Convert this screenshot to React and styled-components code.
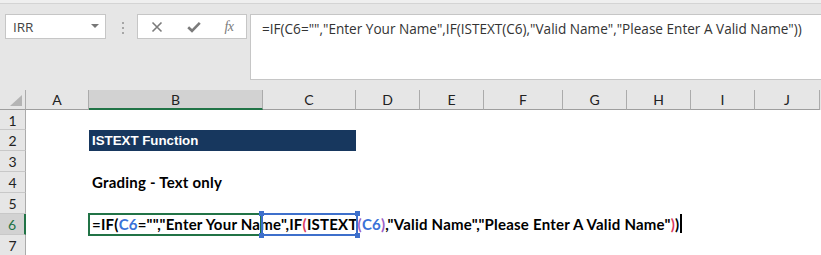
import React from "react";
import styled, { createGlobalStyle } from "styled-components";

const GlobalStyle = createGlobalStyle`
  html, body { margin: 0; padding: 0; background: #ffffff; }
  body { overflow: hidden; font-family: "Lato", "Liberation Sans", sans-serif; }
  * { box-sizing: border-box; }
`;

const COLS = "26px 63px 174px 93px 64px 64px 79px 64px 64px 64px 65px";

const Page = styled.div`
  width: 821px;
  height: 255px;
  overflow: hidden;
  background: #fff;
`;

const TopStrip = styled.div`
  height: 4px;
  background: #efefef;
  border-bottom: 1px solid #d4d4d4;
`;

const Toolbar = styled.div`
  height: 86px;
  background: #e6e6e6;
  display: flex;
  align-items: flex-start;
  padding: 10px 0 0 5px;
`;

const NameBox = styled.div`
  width: 101px;
  height: 25px;
  background: #fff;
  border: 1px solid #c6c6c6;
  display: flex;
  align-items: center;
  justify-content: space-between;
  padding: 0 6px 0 7px;
  font-family: "Open Sans", "Noto Sans", sans-serif;
  font-size: 13.5px;
  color: #444;
`;

const Caret = styled.span`
  width: 0;
  height: 0;
  border-left: 4px solid transparent;
  border-right: 4px solid transparent;
  border-top: 4px solid #777;
  margin-top: -2px;
`;

const Grip = styled.div`
  width: 2px;
  margin: 8px 13px 0 16px;
  display: flex;
  flex-direction: column;
  gap: 3px;
`;

const Dot = styled.span`
  width: 2px;
  height: 2px;
  background: #a6a6a6;
`;

const ButtonBox = styled.div`
  width: 110px;
  height: 25px;
  background: #fff;
  border: 1px solid #c6c6c6;
  display: flex;
  align-items: center;
`;

const IconSlot = styled.div`
  width: ${(p) => p.$w}px;
  height: 23px;
  display: flex;
  align-items: center;
  justify-content: center;
  color: #7b7b7b;
`;

const Fx = styled.span`
  font-family: "Liberation Serif", "DejaVu Serif", serif;
  font-style: italic;
  font-size: 14px;
  color: #7b7b7b;
  letter-spacing: -0.5px;
`;

const FormulaBox = styled.div`
  margin-left: 3px;
  flex: 1;
  height: 66px;
  background: #fff;
  border: 1px solid #c6c6c6;
  border-right: none;
  padding: 4px 0 0 11px;
  font-family: "Open Sans", "Noto Sans", sans-serif;
  font-size: 13.58px;
  color: #333;
  white-space: nowrap;
  overflow: hidden;
`;

const HeaderRow = styled.div`
  display: grid;
  grid-template-columns: ${COLS};
  height: 20px;
  background: #e6e6e6;
`;

const ColHead = styled.div`
  display: flex;
  align-items: center;
  justify-content: center;
  font-family: "Lato", "Liberation Sans", sans-serif;
  font-size: 14px;
  color: #222;
  border-right: 1px solid #ababab;
  background: ${(p) => (p.$active ? "#d2d2d2" : "#e6e6e6")};
  border-bottom: ${(p) => (p.$active ? "2px solid #217346" : "1px solid #9e9e9e")};
  padding-top: ${(p) => (p.$active ? "1px" : "0")};
`;

const Corner = styled.div`
  border-right: 1px solid #ababab;
  border-bottom: 1px solid #9e9e9e;
  display: flex;
  align-items: flex-end;
  justify-content: flex-end;
  padding: 0 3px 3px 0;
`;

const Row = styled.div`
  display: grid;
  grid-template-columns: ${COLS};
  height: ${(p) => p.$h}px;
  position: relative;
`;

const RowHead = styled.div`
  display: flex;
  align-items: center;
  justify-content: center;
  font-family: "Lato", "Liberation Sans", sans-serif;
  font-size: 14px;
  color: ${(p) => (p.$active ? "#217346" : "#222")};
  background: ${(p) => (p.$active ? "#d2d2d2" : "#e6e6e6")};
  border-bottom: 1px solid #c8c8c8;
  border-right: ${(p) => (p.$active ? "2px solid #217346" : "1px solid #ababab")};
  padding-top: 1px;
`;

const Cell = styled.div`
  grid-column: ${(p) => p.$col} / span ${(p) => p.$span || 1};
  min-width: 0;
  display: flex;
  align-items: flex-end;
  padding: 0 0 2px 3px;
  white-space: nowrap;
  overflow: visible;
`;

const TitleCell = styled(Cell)`
  background: #17375e;
  color: #fff;
  font-family: "Liberation Sans", Arial, sans-serif;
  font-weight: 700;
  font-size: 13.3px;
  padding-bottom: 3px;
`;

const BoldText = styled.span`
  font-family: "Lato", "Liberation Sans", sans-serif;
  font-weight: 700;
  font-size: 15px;
  letter-spacing: 0.22px;
  color: #000;
  display: inline-flex;
  align-items: center;
`;

const Tok = styled.span`
  color: ${(p) => p.$c};
`;

const Caret2 = styled.span`
  display: inline-block;
  width: 2px;
  height: 19px;
  background: #000;
  margin-left: 1px;
`;

const ActiveBox = styled.div`
  position: absolute;
  left: 88px;
  top: -1px;
  width: 174px;
  height: 23px;
  border: 2px solid #217346;
  pointer-events: none;
`;

const RangeBox = styled.div`
  position: absolute;
  left: 261px;
  top: -1px;
  width: 97px;
  height: 23px;
  border: 2px solid #3d6fcb;
  pointer-events: none;
`;

const Handle = styled.span`
  position: absolute;
  width: 5px;
  height: 5px;
  background: #3d6fcb;
  left: ${(p) => p.$x}px;
  top: ${(p) => p.$y}px;
`;

const rowNums = [1, 2, 3, 4, 5, 6, 7];

const BLUE = "#3a72d8";
const RED = "#dc3a62";
const PURPLE = "#9b5fc8";

export default function App() {
  return (
    <Page>
      <GlobalStyle />
      <TopStrip />
      <Toolbar>
        <NameBox>
          <span>IRR</span>
          <Caret />
        </NameBox>
        <Grip>
          <Dot />
          <Dot />
          <Dot />
        </Grip>
        <ButtonBox>
          <IconSlot $w={38}>
            <svg width="12" height="12" viewBox="0 0 12 12">
              <path d="M1.5 1.5 L10.5 10.5 M10.5 1.5 L1.5 10.5" stroke="#7b7b7b" strokeWidth="1.6" fill="none" />
            </svg>
          </IconSlot>
          <IconSlot $w={36}>
            <svg width="14" height="12" viewBox="0 0 14 12">
              <path d="M1.2 6.2 L5 9.8 L12.8 1.8" stroke="#7b7b7b" strokeWidth="2.6" fill="none" strokeLinejoin="miter" />
            </svg>
          </IconSlot>
          <IconSlot $w={34}>
            <Fx>fx</Fx>
          </IconSlot>
        </ButtonBox>
        <FormulaBox>
          =IF(C6="","Enter Your Name",IF(ISTEXT(C6),"Valid Name","Please Enter A Valid Name"))
        </FormulaBox>
      </Toolbar>
      <HeaderRow>
        <Corner>
          <svg width="12" height="11" viewBox="0 0 12 11">
            <path d="M12 0 L12 11 L0 11 Z" fill="#b4b4b4" />
          </svg>
        </Corner>
        {["A", "B", "C", "D", "E", "F", "G", "H", "I", "J", ""].map((c) =>
          c ? (
            <ColHead key={c} $active={c === "B"}>
              {c}
            </ColHead>
          ) : (
            <ColHead key="blank" />
          )
        )}
      </HeaderRow>
      {rowNums.map((n) => (
        <Row key={n} $h={n === 1 ? 20 : 21}>
          <RowHead $active={n === 6}>{n}</RowHead>
          {n === 2 && (
            <TitleCell $col={3} $span={2}>
              ISTEXT Function
            </TitleCell>
          )}
          {n === 4 && (
            <Cell $col={3}>
              <BoldText>Grading - Text only</BoldText>
            </Cell>
          )}
          {n === 6 && (
            <>
              <Cell $col={3}>
                <BoldText>
                  =IF(<Tok $c={BLUE}>C6</Tok>="","Enter Your Name",IF<Tok $c={RED}>(</Tok>ISTEXT
                  <Tok $c={PURPLE}>(</Tok>
                  <Tok $c={BLUE}>C6</Tok>
                  <Tok $c={PURPLE}>)</Tok>,"Valid Name","Please Enter A Valid Name"<Tok $c={RED}>)</Tok>)
                  <Caret2 />
                </BoldText>
              </Cell>
              <ActiveBox />
              <RangeBox />
              <Handle $x={259} $y={-3} />
              <Handle $x={355} $y={-3} />
              <Handle $x={259} $y={19} />
              <Handle $x={355} $y={19} />
            </>
          )}
        </Row>
      ))}
    </Page>
  );
}
